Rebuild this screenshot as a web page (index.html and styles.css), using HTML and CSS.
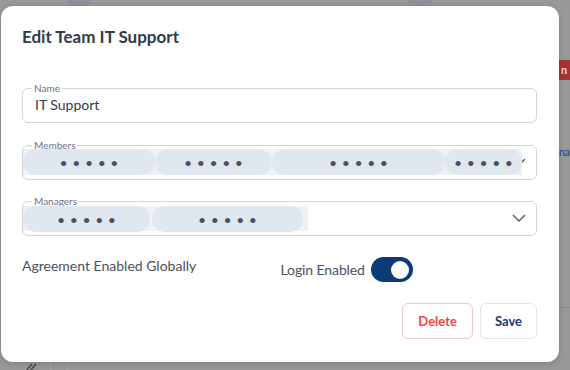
FILE: index.html
```html
<!DOCTYPE html>
<html lang="en">
<head>
<meta charset="utf-8">
<title>Edit Team IT Support</title>
<link rel="stylesheet" href="styles.css">
</head>
<body>
<div class="page">
  <div class="bg-tab bg-tab-left"></div>
  <div class="bg-tab bg-tab-right"></div>
  <div class="bg-badge">n</div>
  <div class="bg-link">na</div>
  <div class="bg-rule"></div>
  <div class="bg-col bg-col-a"></div>
  <div class="bg-col bg-col-b"></div>
  <svg class="bg-edit" width="12" height="10" viewBox="0 0 12 10"><path d="M1 10 L7 3 M5 10 L11 3" stroke="#3e4450" stroke-width="1.4" fill="none"/></svg>

  <div class="modal">
    <h2 class="title">Edit Team IT Support</h2>

    <fieldset class="field field-text">
      <legend>Name</legend>
      <div class="value">IT Support</div>
    </fieldset>

    <fieldset class="field field-select">
      <legend>Members</legend>
      <div class="select-body">
        <div class="chips">
          <span class="chip chip-m1">•••••</span>
          <span class="chip chip-m2">•••••</span>
          <span class="chip chip-m3">•••••</span>
          <span class="chip chip-m4">•••••</span>
        </div>
        <svg class="chevron" width="14" height="8" viewBox="0 0 14 8"><path d="M1 1 L7 7 L13 1" stroke="#5a6270" stroke-width="1.5" fill="none"/></svg>
      </div>
    </fieldset>

    <fieldset class="field field-select field-managers">
      <legend>Managers</legend>
      <div class="select-body">
        <div class="chips chips-tail">
          <span class="chip chip-g1">•••••</span>
          <span class="chip chip-g2">•••••</span>
        </div>
        <svg class="chevron" width="14" height="8" viewBox="0 0 14 8"><path d="M1 1 L7 7 L13 1" stroke="#5a6270" stroke-width="1.5" fill="none"/></svg>
      </div>
    </fieldset>

    <div class="options">
      <div class="option">Agreement Enabled Globally</div>
      <div class="option option-switch">
        <span>Login Enabled</span>
        <span class="switch"><span class="knob"></span></span>
      </div>
    </div>

    <div class="actions">
      <button class="btn btn-delete">Delete</button>
      <button class="btn btn-save">Save</button>
    </div>
  </div>
</div>
</body>
</html>
```

FILE: styles.css
```css
* { box-sizing: border-box; }

html, body {
  margin: 0;
  padding: 0;
}

body {
  background: #999999;
  font-family: Lato, "Noto Sans", sans-serif;
  width: 570px;
  height: 370px;
  overflow: hidden;
}

.page {
  position: relative;
  width: 570px;
  height: 370px;
  padding: 6px 0 0 1px;
}

/* background page glimpses */
.bg-tab {
  position: absolute;
  top: 0;
  height: 6px;
  background: #8e9099;
  border-radius: 0 0 4px 4px;
}
.bg-tab-left { left: 68px; width: 22px; }
.bg-tab-right { left: 408px; width: 24px; }

.bg-badge {
  position: absolute;
  left: 556px;
  top: 60px;
  width: 20px;
  height: 20px;
  background: #a83333;
  border-radius: 3px;
  color: #f1d9d9;
  font-size: 11px;
  font-weight: 700;
  line-height: 20px;
  padding-left: 5px;
}

.bg-link {
  position: absolute;
  left: 559px;
  top: 146px;
  color: #1f3c80;
  font-size: 10.5px;
  line-height: 13px;
  letter-spacing: -0.3px;
}

.bg-rule {
  position: absolute;
  left: 559px;
  top: 307px;
  width: 11px;
  height: 1px;
  background: #8a8a8a;
}

.bg-col {
  position: absolute;
  top: 362px;
  width: 1px;
  height: 8px;
  background: #a6a6a6;
}
.bg-col-a { left: 50px; }
.bg-col-b { left: 67px; }

.bg-edit {
  position: absolute;
  left: 25px;
  top: 361px;
}

/* modal */
.modal {
  position: relative;
  z-index: 1;
  width: 558px;
  height: 356px;
  background: #ffffff;
  border-radius: 12px;
  box-shadow: 0 2px 6px rgba(40, 44, 70, 0.25);
  padding: 21px 22px 21px 21px;
  display: flex;
  flex-direction: column;
}

.title {
  margin: 0 0 37px;
  font-size: 17px;
  line-height: 20px;
  font-weight: 700;
  color: #323b4b;
}

.field {
  margin: 0;
  padding: 0;
  min-width: 0;
  border: 1px solid #cdd5e0;
  border-radius: 6px;
}

.field legend {
  margin-left: 9px;
  padding: 0 2px;
  font-size: 10px;
  line-height: 8px;
  color: #6b7280;
}

.field-text .value {
  padding: 4px 12px 9px;
  font-size: 14px;
  line-height: 17px;
  color: #333a47;
}

.field-select {
  margin-top: 18px;
  padding-bottom: 4px;
}

.field-managers {
  margin-top: 17px;
  padding-bottom: 4px;
}

.select-body {
  position: relative;
  height: 26px;
  display: flex;
}

.chips {
  position: relative;
  z-index: 1;
  display: flex;
  background: #eef1f5;
}

.chips-tail {
  margin-top: 1px;
  padding-right: 5px;
}

.chip {
  display: flex;
  align-items: center;
  justify-content: center;
  height: 26px;
  border-radius: 13px;
  background: #e1e7ef;
  color: #4a5361;
  font-size: 14px;
  letter-spacing: 4.6px;
  text-indent: 4.6px;
}

.chip-m1 { width: 132px; }
.chip-m2 { width: 117px; }
.chip-m3 { width: 173px; }
.chip-m4 { width: 77px; }
.chip-g1 { width: 127px; margin-right: 2px; }
.chip-g2 { width: 151px; }

.chevron {
  position: absolute;
  right: 10px;
  top: 9px;
}

.options {
  margin-top: 21px;
  display: grid;
  grid-template-columns: 1fr 1fr;
  align-items: start;
  font-size: 14px;
  line-height: 17px;
  color: #4b5261;
}

.option-switch {
  display: flex;
  align-items: center;
  gap: 6px;
  padding-left: 1px;
  letter-spacing: -0.1px;
}

.switch {
  display: flex;
  justify-content: flex-end;
  align-items: center;
  width: 42px;
  height: 25px;
  border-radius: 13px;
  background: #0b3b77;
  padding-right: 4px;
}

.knob {
  width: 18px;
  height: 18px;
  border-radius: 50%;
  background: #ffffff;
}

.actions {
  margin-top: 21px;
  display: flex;
  justify-content: flex-end;
  gap: 7px;
}

.btn {
  height: 36px;
  padding: 0 14px;
  border-radius: 6px;
  background: #ffffff;
  font-family: Lato, "Noto Sans", sans-serif;
  font-size: 13px;
  font-weight: 700;
  cursor: pointer;
}

.btn-delete {
  border: 1px solid #f5c4c4;
  color: #f04848;
  padding: 0 15px;
}

.btn-save {
  border: 1px solid #dfe4ee;
  color: #1e3a66;
}
```
